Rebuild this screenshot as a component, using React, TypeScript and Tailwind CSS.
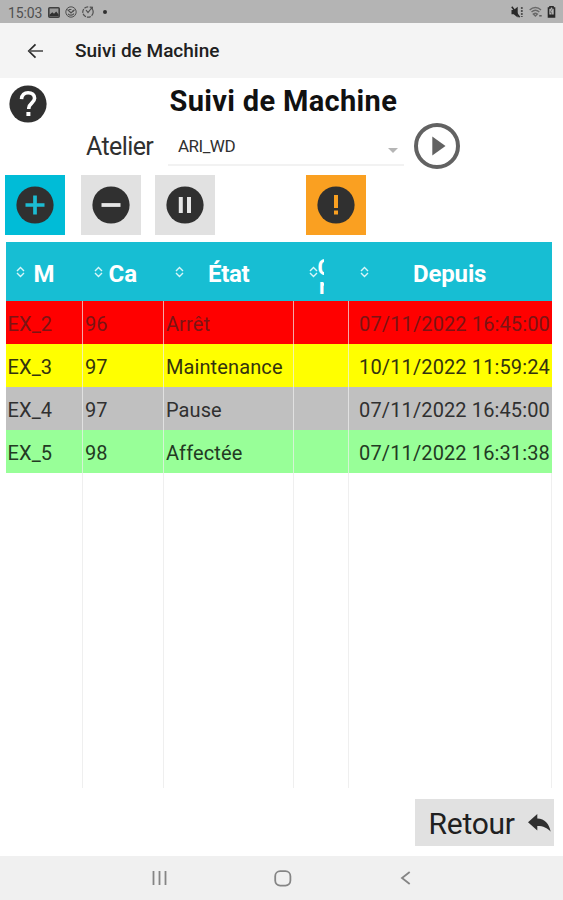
import React from "react";

type Row = { m: string; ca: string; etat: string; depuis: string; tone: string };

const rows: Row[] = [
  { m: "EX_2", ca: "96", etat: "Arrêt", depuis: "07/11/2022 16:45:00", tone: "bg-[#ff0000] text-[#7c1414]" },
  { m: "EX_3", ca: "97", etat: "Maintenance", depuis: "10/11/2022 11:59:24", tone: "bg-[#ffff00] text-[#33330f]" },
  { m: "EX_4", ca: "97", etat: "Pause", depuis: "07/11/2022 16:45:00", tone: "bg-[#c0c0c0] text-[#303030]" },
  { m: "EX_5", ca: "98", etat: "Affectée", depuis: "07/11/2022 16:31:38", tone: "bg-[#98ff98] text-[#233a23]" },
];

const columns = "grid grid-cols-[77px_81px_130px_55px_203px]";

function Sorter() {
  return (
    <svg className="mb-px shrink-0" width="9" height="12" viewBox="0 0 9 12" fill="none" stroke="#d9f6f9" strokeWidth="1.4">
      <path d="M1 4.9 4.5 1.4 8 4.9M1 7.1l3.5 3.5L8 7.1" />
    </svg>
  );
}

function Disc({ children }: { children: React.ReactNode }) {
  return (
    <svg width="38" height="38" viewBox="0 0 38 38">
      <circle cx="19" cy="19" r="18.6" fill="#303030" />
      {children}
    </svg>
  );
}

function StatusBar() {
  return (
    <header className="flex h-[23px] items-center bg-[#b4b4b4] pl-2 pr-[7px] text-[#505050]">
      <span className="w-[40px] whitespace-nowrap pt-[2px] text-[14px] leading-none tracking-[-0.1px]">15:03</span>
      <svg width="12" height="11" viewBox="0 0 12 11" className="mt-px">
        <rect x=".8" y=".8" width="10.4" height="9.4" rx="1" fill="#9a9a9a" stroke="#404040" strokeWidth="1.6" />
        <path d="M1.5 9.2V7.8l2.8-2.6L6 6.8l2.2-2.2 2.4 3v1.6Z" fill="#303030" />
      </svg>
      <svg width="12" height="12" viewBox="0 0 12 12" className="ml-[5px] mt-px" fill="none" stroke="#505050">
        <circle cx="6" cy="6" r="5.2" />
        <path d="M2.5 3.5 6 7l3.5-3.2M3 7.8c2 2 4.5 1.8 6-.2M4 3.5h2.4M7 5.2h2" strokeWidth="1.2" />
      </svg>
      <svg width="12" height="12" viewBox="0 0 12 12" className="ml-[5px] mt-px" fill="none" stroke="#505050" strokeWidth="1.2">
        <path d="M6.2.8A5.2 5.2 0 1 0 11.2 6" strokeDasharray="4 1" />
        <path d="M11.2 6c0-1.5-.4-2.5-1.2-3.5M4 4l2 2.6L9.6 2M7.7 1.2l2.7.2-.2 2.2" />
      </svg>
      <span className="ml-[9px] mt-px size-1 rounded-full bg-[#303030]" />
      <div className="ml-auto flex items-center gap-[5px]">
        <svg width="13" height="12" viewBox="0 0 13 12" fill="#292929">
          <path d="M.5 4h2.2l4-3.2v10.6l-4-3.2H.5Z" />
          <path d="m.8.8 7.8 10.5" stroke="#292929" strokeWidth="1.5" />
          <path d="M10.8 1v10" stroke="#505050" strokeWidth="1.8" strokeDasharray="2 1" />
        </svg>
        <svg width="13" height="12" viewBox="0 0 13 12" fill="none" stroke="#696969" strokeWidth="1.4">
          <path d="M.7 4C4 .7 8.7.7 12 4M2.5 6c2.4-2.2 5.5-2.2 7.8 0M4.3 8c1.3-1 2.8-1 4.1 0L6.4 10Z" />
          <path d="M10.2 9.8h2.5" stroke="#555" />
        </svg>
        <svg width="9" height="12" viewBox="0 0 9 12">
          <path d="M1.5 2H3V.7h3V2h1.5v9H1.5Z" fill="none" stroke="#292929" strokeWidth="1.6" />
          <path d="m5.2 3-2 3.5h1.4v2.3" fill="none" stroke="#707070" />
          <path d="M1 8.5h7V11H1Z" fill="#292929" />
        </svg>
      </div>
    </header>
  );
}

export default function App() {
  return (
    <div className="flex h-[900px] w-[563px] flex-col overflow-hidden bg-white font-[Roboto,sans-serif] text-[#303030]">
      <StatusBar />
      <nav className="flex h-[55px] shrink-0 items-center bg-[#f4f4f4] pl-[27px]">
        <svg width="17" height="16" viewBox="0 0 17 16" fill="none" stroke="#292929" strokeWidth="1.7">
          <path d="M8.5 1.3 1.8 8l6.7 6.7" />
          <path d="M2 8h14" stroke="#555" />
        </svg>
        <span className="ml-[31px] whitespace-nowrap text-[19px] font-medium leading-none text-[#202020]">Suivi de Machine</span>
      </nav>

      <div className="flex h-[48px] shrink-0 items-start pl-[9px] pt-[7px]">
        <Disc>
          <path d="M12.5 14.2c.2-4.2 3-6.5 6.6-6.5 3.8 0 6.5 2.2 6.5 5.6 0 4.5-5.8 5.2-5.8 9.8v1" fill="none" stroke="#fff" strokeWidth="3.6" />
          <path d="M17.4 27h4v4h-4z" fill="#fff" />
        </Disc>
        <h1 className="ml-[122.5px] mt-px whitespace-nowrap text-[29px] font-bold leading-[30px] tracking-[0.33px] text-[#111]">Suivi de Machine</h1>
      </div>

      <div className="flex h-[49px] shrink-0 pl-[86px]">
        <span className="w-[82px] whitespace-nowrap pt-[6px] text-[25px] leading-[30px] tracking-[-0.6px]">Atelier</span>
        <div className="flex h-[40px] w-[236px] items-center border-b-2 border-[#f2f2f2] pl-[10px] pr-[6px]">
          <span className="mt-[2px] whitespace-nowrap text-[17px] leading-none tracking-[-0.5px]">ARI_WD</span>
          <svg className="ml-auto mt-[10px]" width="10" height="5" viewBox="0 0 10 5" fill="#b5b5b5"><path d="M0 0h10L5 5Z" /></svg>
        </div>
        <svg className="ml-[10px] mt-[-3px]" width="46" height="46" viewBox="0 0 46 46">
          <circle cx="23" cy="23" r="21" fill="none" stroke="#626262" strokeWidth="4" />
          <path d="M18.3 13.5v19L31.5 23Z" fill="#626262" />
        </svg>
      </div>

      <div className="flex h-[66.5px] shrink-0 pl-[5.4px]">
        <div className="flex size-[60px] items-center justify-center bg-[#00bcd7]">
          <Disc><path d="M9.5 19h19M19 9.5v19" stroke="#1cbcd2" strokeWidth="3.7" /></Disc>
        </div>
        <div className="ml-[15.5px] flex size-[60px] items-center justify-center bg-[#e1e1e1]">
          <Disc><path d="M9.5 19h19" stroke="#e6e6e6" strokeWidth="3.8" /></Disc>
        </div>
        <div className="ml-[14.3px] flex size-[60px] items-center justify-center bg-[#e1e1e1]">
          <Disc><path d="M14.8 11v16M23 11v16" stroke="#e6e6e6" strokeWidth="4" /></Disc>
        </div>
        <div className="ml-[90.8px] flex size-[60px] items-center justify-center bg-[#faa021]">
          <Disc><path d="M19 9v13M19 24.5v4" stroke="#faa021" strokeWidth="4" /></Disc>
        </div>
      </div>

      <section className="flex h-[546.5px] w-[552px] shrink-0 flex-col pl-[5.5px]">
        <div className={`${columns} h-[59.5px] w-[546px] shrink-0 bg-[#17bed3] text-[24px] font-bold leading-[60px] text-white`}>
          <div className="flex items-center pl-[10.5px]"><Sorter /><span className="ml-[8.5px] pt-[2px]">M</span></div>
          <div className="flex items-center pl-[11px]"><Sorter /><span className="ml-[6px] pt-[2px]">Ca</span></div>
          <div className="flex items-center pl-[11px]"><Sorter /><span className="ml-[24.5px] pt-[2px] tracking-[-0.3px]">État</span></div>
          <div className="flex items-center pl-[15px]">
            <Sorter />
            <div className="flex h-[42px] w-[6px] flex-col overflow-hidden pt-[3px] text-[22px] leading-[26px]">
              <span className="h-[21px]">C</span>
              <span className="h-[21px] pl-[1.5px] leading-[22px]">r</span>
            </div>
          </div>
          <div className="flex items-center pl-[11px]"><Sorter /><span className="ml-[44.5px] pt-[2px] tracking-[-0.15px]">Depuis</span></div>
        </div>
        {rows.map((row) => (
          <div key={row.m} className={`${columns} h-[43px] w-[546px] shrink-0 whitespace-nowrap text-[20px] leading-[46px] tracking-[0.12px] ${row.tone}`}>
            <span className="border-r border-[#efefef]/70 pl-[2px]">{row.m}</span>
            <span className="border-r border-[#efefef]/70 pl-[2.4px]">{row.ca}</span>
            <span className="border-r border-[#efefef]/70 pl-[2.4px]">{row.etat}</span>
            <span className="border-r border-[#efefef]/70" />
            <span className="pr-[1.6px] text-right">{row.depuis}</span>
          </div>
        ))}
        <div className={`${columns} w-[546px] flex-1`}>
          {[0, 1, 2, 3, 4].map((i) => <span key={i} className="border-r border-[#efefef]" />)}
        </div>
      </section>

      <div className="flex flex-1 items-start justify-end pr-[9px] pt-[11px]">
        <div className="flex h-[47px] w-[139px] items-center bg-[#e1e1e1] pl-[13.5px]">
          <span className="whitespace-nowrap pt-[3px] text-[30px] leading-none tracking-[-0.25px] text-[#202020]">Retour</span>
          <svg className="ml-auto mr-[3px]" width="23" height="18" viewBox="0 0 23 18" fill="#303030">
            <path d="M9.3 0v4.5C17 5 21 9.5 22.7 17.7 19.2 13.8 15.5 12 9.3 12v4.6L0 8.2Z" />
          </svg>
        </div>
      </div>

      <footer className="flex h-[44px] shrink-0 items-center bg-[#f0f0f0] pl-[152px] text-[#858585]">
        <svg width="15" height="14" viewBox="0 0 15 14" stroke="currentColor" strokeWidth="1.8"><path d="M1.5 0v14M7.5 0v14M13.5 0v14" /></svg>
        <svg className="ml-[107px]" width="18" height="17" viewBox="0 0 18 17" fill="none" stroke="currentColor" strokeWidth="1.8"><rect x="1.2" y="1.2" width="15.2" height="14.4" rx="5" /></svg>
        <svg className="ml-[108px]" width="11" height="14" viewBox="0 0 11 14" fill="none" stroke="currentColor" strokeWidth="1.8"><path d="M9.7 1 2 7l7.7 6" /></svg>
      </footer>
    </div>
  );
}
